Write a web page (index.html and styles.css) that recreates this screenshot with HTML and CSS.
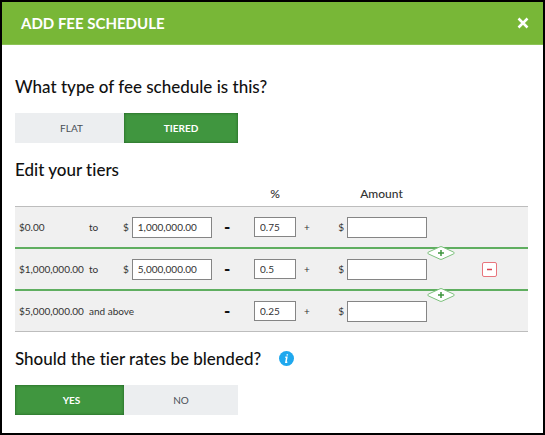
FILE: index.html
```html
<!DOCTYPE html>
<html lang="en">
<head>
  <meta charset="UTF-8" />
  <meta name="viewport" content="width=device-width, initial-scale=1.0" />
  <title>Add Fee Schedule</title>
  <link rel="stylesheet" href="styles.css">
</head>
<body>
  <div class="modal">
    <header class="modal-header">
      <h1>ADD FEE SCHEDULE</h1>
      <button type="button" class="close" aria-label="Close">
        <svg width="12" height="12" viewBox="0 0 12 12"><path d="M1.5 1.5l9 9M10.5 1.5l-9 9" /></svg>
      </button>
    </header>

    <main class="modal-body">
      <h2>What type of fee schedule is this?</h2>
      <div class="toggle">
        <button type="button">FLAT</button>
        <button type="button" class="active">TIERED</button>
      </div>

      <h2 class="tiers-title">Edit your tiers</h2>
      <table class="tiers">
        <colgroup>
          <col class="col-from"><col class="col-to"><col class="col-limit"><col class="col-minus">
          <col class="col-rate"><col class="col-plus"><col class="col-amount"><col>
        </colgroup>
        <thead>
          <tr>
            <th colspan="4"></th>
            <th>%</th>
            <th></th>
            <th>Amount</th>
            <th></th>
          </tr>
        </thead>
        <tbody>
          <tr>
            <td class="from">$0.00</td>
            <td>to</td>
            <td><label class="money">$ <input type="text" value="1,000,000.00" aria-label="Tier 1 limit"></label></td>
            <td class="minus">-</td>
            <td><input type="text" class="rate" value="0.75" aria-label="Tier 1 rate"></td>
            <td class="plus">+</td>
            <td><label class="money right">$ <input type="text" aria-label="Tier 1 amount"></label></td>
            <td class="actions">
              <button type="button" class="add" aria-label="Add tier">
                <svg width="28" height="14" viewBox="0 0 28 14"><path class="diamond" d="M1.2 6.2L13 .8Q14 .4 15 .8L26.8 6.2Q27.8 7 26.8 7.8L15 13.2Q14 13.6 13 13.2L1.2 7.8Q.2 7 1.2 6.2z" /><path class="sign" d="M11 7h6M14 4v6" /></svg>
              </button>
            </td>
          </tr>
          <tr>
            <td class="from">$1,000,000.00</td>
            <td>to</td>
            <td><label class="money">$ <input type="text" value="5,000,000.00" aria-label="Tier 2 limit"></label></td>
            <td class="minus">-</td>
            <td><input type="text" class="rate" value="0.5" aria-label="Tier 2 rate"></td>
            <td class="plus">+</td>
            <td><label class="money right">$ <input type="text" aria-label="Tier 2 amount"></label></td>
            <td class="actions">
              <button type="button" class="remove" aria-label="Remove tier">
                <svg width="15" height="15" viewBox="0 0 15 15"><rect x=".5" y=".5" width="14" height="14" rx="1.5" /><path d="M5 7.5h5" /></svg>
              </button>
              <button type="button" class="add" aria-label="Add tier">
                <svg width="28" height="14" viewBox="0 0 28 14"><path class="diamond" d="M1.2 6.2L13 .8Q14 .4 15 .8L26.8 6.2Q27.8 7 26.8 7.8L15 13.2Q14 13.6 13 13.2L1.2 7.8Q.2 7 1.2 6.2z" /><path class="sign" d="M11 7h6M14 4v6" /></svg>
              </button>
            </td>
          </tr>
          <tr>
            <td class="from">$5,000,000.00</td>
            <td colspan="2">and above</td>
            <td class="minus">-</td>
            <td><input type="text" class="rate" value="0.25" aria-label="Tier 3 rate"></td>
            <td class="plus">+</td>
            <td><label class="money right">$ <input type="text" aria-label="Tier 3 amount"></label></td>
            <td></td>
          </tr>
        </tbody>
      </table>

      <h2 class="blended">Should the tier rates be blended?
        <svg class="info" width="15" height="15" viewBox="0 0 15 15"><circle cx="7.5" cy="7.5" r="7.5" /><path d="M8.3 3.2v1.2M6.3 6.3h1.5l-.9 5h1.4" /></svg>
      </h2>
      <div class="toggle">
        <button type="button" class="active">YES</button>
        <button type="button">NO</button>
      </div>
    </main>
  </div>
</body>
</html>
```
FILE: styles.css
```css
* { box-sizing: border-box; }
body {
  margin: 0;
  font-family: Lato, "Liberation Sans", sans-serif;
  font-size: 10px;
  font-variant-ligatures: none;
  color: #333;
  background: #fff;
}
button { font-family: inherit; cursor: pointer; }
.modal {
  min-height: 100vh;
  border: 2px solid #000;
  background: #fff;
}
.modal-header {
  display: flex;
  align-items: center;
  justify-content: space-between;
  height: 43px;
  padding: 0 14px 0 19px;
  background: #78b737;
  border-bottom: 1px solid #8dc357;
}
.modal-header h1 {
  margin: 0;
  font-size: 15px;
  font-weight: 700;
  color: #fff;
}
.close {
  display: flex;
  padding: 0;
  border: none;
  background: none;
}
.close svg { fill: none; stroke: #fff; stroke-width: 2.5; }
.modal-body { padding: 30px 15px 16px 13px; }
h2 {
  display: flex;
  align-items: center;
  gap: 18px;
  margin: 0 0 15px;
  font-size: 17px;
  font-weight: 500;
  line-height: 23px;
  color: #111;
}
.toggle { display: flex; }
.toggle button {
  width: 114px;
  height: 30px;
  padding: 0;
  border: none;
  background: #eceef0;
  color: #4a5057;
  font-size: 10px;
}
.toggle button:first-child {
  width: 109px;
  padding-left: 4px;
}
.toggle .active {
  background: #40963f;
  box-shadow: inset 0 0 3px #1d5c20;
  color: #fff;
  font-weight: 700;
}
.tiers-title { margin: 15px 0 0; }
.tiers {
  width: 100%;
  table-layout: fixed;
  border-collapse: separate;
  border-spacing: 0;
}
.col-from { width: 74px; }
.col-to { width: 34px; }
.col-limit { width: 90px; }
.col-minus { width: 41px; }
.col-rate { width: 42px; }
.col-plus { width: 40px; }
.col-amount { width: 91px; }
.tiers th {
  height: 26px;
  padding: 0;
  border-bottom: 1px solid #bdbdbd;
  font-size: 12px;
  font-weight: 500;
}
.tiers td {
  height: 42px;
  padding: 0;
  background: #f0f0f0;
  border-bottom: 2px solid #5fae60;
}
.tiers tbody tr:last-child td {
  height: 41px;
  border-bottom: 1px solid #bdbdbd;
}
.tiers .from { padding-left: 4px; }
.tiers .minus {
  padding-left: 11px;
  font-size: 17px;
  font-weight: 900;
  line-height: 20px;
  color: #111;
}
.tiers .plus { padding-left: 8px; }
.money {
  display: flex;
  align-items: center;
  gap: 3px;
}
.money.right { justify-content: flex-end; }
.tiers input {
  width: 80px;
  height: 21px;
  padding: 0 5px;
  border: 1px solid #858585;
  border-radius: 0;
  background: #fff;
  font-family: inherit;
  font-size: 10px;
  color: #333;
}
.tiers .rate {
  display: block;
  width: 42px;
  height: 20px;
}
.tiers .actions { position: relative; }
.add, .remove {
  display: block;
  padding: 0;
  border: none;
  background: none;
}
.add svg, .remove svg { display: block; }
/* sits on the line between two tiers */
.add {
  position: absolute;
  z-index: 1;
  left: 0;
  bottom: -13px;
}
.diamond { fill: #fff; stroke: #7cc07c; }
.sign { fill: none; stroke: #3f963f; stroke-width: 1.5; }
.remove { margin-left: 55px; }
.remove rect { fill: #fff; stroke: #e8757d; }
.remove path { stroke: #d9434e; stroke-width: 1.5; }
.blended { margin-top: 15px; }
.info circle { fill: #1fa8ee; }
.info path { fill: none; stroke: #fff; stroke-width: 1.5; }
```
